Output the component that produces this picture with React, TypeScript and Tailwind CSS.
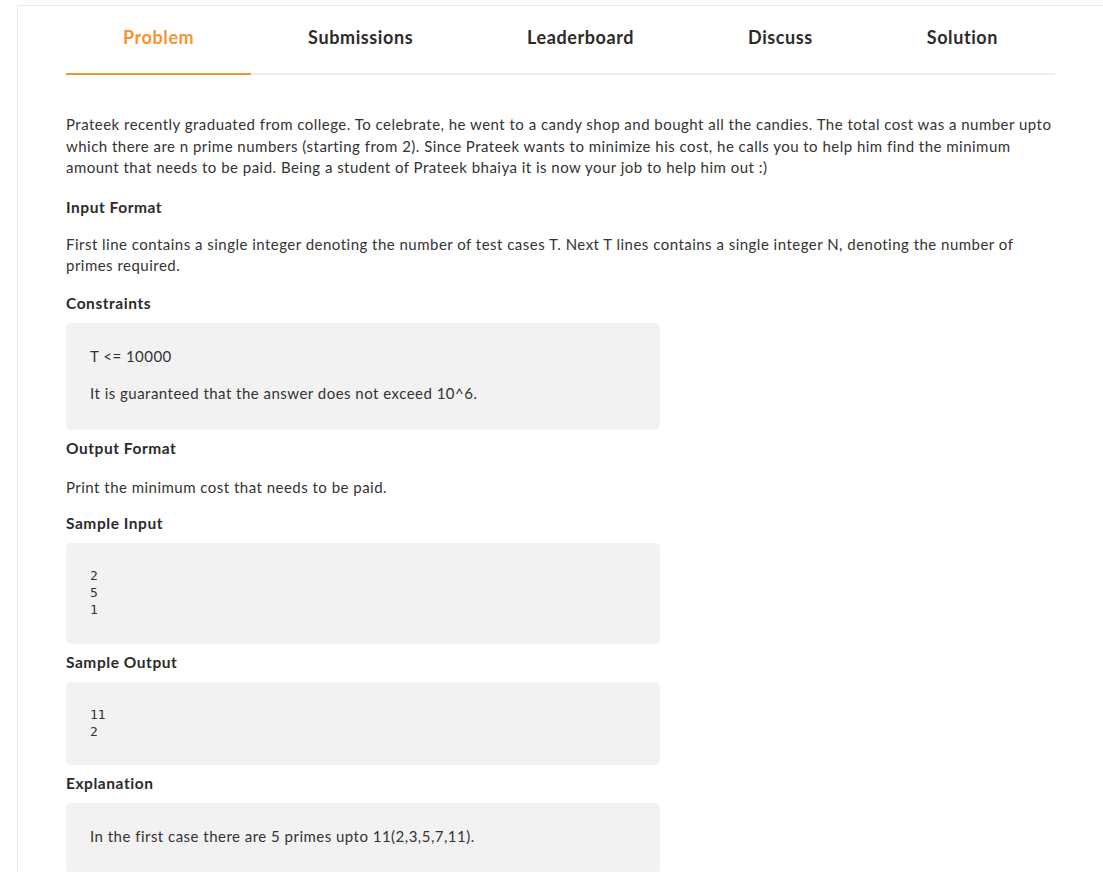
const tabs = ["Problem", "Submissions", "Leaderboard", "Discuss", "Solution"];

const Heading = ({ children, className = "" }: { children: React.ReactNode; className?: string }) => (
	<h3 className={`text-[15.5px] leading-[21px] font-bold tracking-[0.55px] text-[#2b2b2b] ${className}`}>{children}</h3>
);

const Box = ({ children, className = "" }: { children: React.ReactNode; className?: string }) => (
	<div className={`w-[594px] rounded-[5px] bg-[#f2f2f2] px-6 mt-[9px] ${className}`}>{children}</div>
);

const Mono = ({ lines }: { lines: string[] }) => (
	<pre className="font-['DejaVu_Sans_Mono',monospace] text-[13px] leading-[17px] tracking-normal text-[#333]">
		{lines.join("\n")}
	</pre>
);

export default function App() {
	return (
		<div className="min-h-screen bg-white pl-[17px] pt-[5px] font-['Lato',sans-serif] text-[15px] text-[#333]">
			<div className="border-t border-l border-[#ececec] px-12 pb-10">
				{/* Tabs */}
				<div className="flex border-b-2 border-[#eeeeee] h-[69px]">
					{tabs.map((t, i) => (
						<div
							key={t}
							className={`flex-auto flex justify-center pt-[19px] text-[18px] tracking-[0.6px] font-bold leading-[24px] ${
								i === 0 ? "text-[#f39433] border-b-2 border-[#f39433] -mb-[2px]" : "text-[#2b2b2b]"
							}`}>
							{t}
						</div>
					))}
				</div>

				<div className="leading-[21.5px] tracking-[0.48px]">
					<p className="mt-[39px]">
						Prateek recently graduated from college. To celebrate, he went to a candy shop and bought all the candies. The
						total cost was a number upto which there are n prime numbers (starting from 2). Since Prateek wants to minimize
						his cost, he calls you to help him find the minimum amount that needs to be paid. Being a student of Prateek
						bhaiya it is now your job to help him out :)
					</p>

					<Heading className="mt-[18px]">Input Format</Heading>
					<p className="mt-4">
						First line contains a single integer denoting the number of test cases T. Next T lines contains a single
						integer N, denoting the number of primes required.
					</p>

					<Heading className="mt-4">Constraints</Heading>
					<Box className="pt-[23px] pb-[25px]">
						<p>T &lt;= 10000</p>
						<p className="mt-4">It is guaranteed that the answer does not exceed 10^6.</p>
					</Box>

					<Heading className="mt-2">Output Format</Heading>
					<p className="mt-[18px]">Print the minimum cost that needs to be paid.</p>

					<Heading className="mt-[15px]">Sample Input</Heading>
					<Box className="pt-6 pb-[26px]">
						<Mono lines={["2", "5", "1"]} />
					</Box>

					<Heading className="mt-2">Sample Output</Heading>
					<Box className="pt-6 pb-[25px]">
						<Mono lines={["11", "2"]} />
					</Box>

					<Heading className="mt-2">Explanation</Heading>
					<Box className="pt-[23px] pb-[25px]">
						<p>In the first case there are 5 primes upto 11(2,3,5,7,11).</p>
					</Box>
				</div>
			</div>
		</div>
	);
}
